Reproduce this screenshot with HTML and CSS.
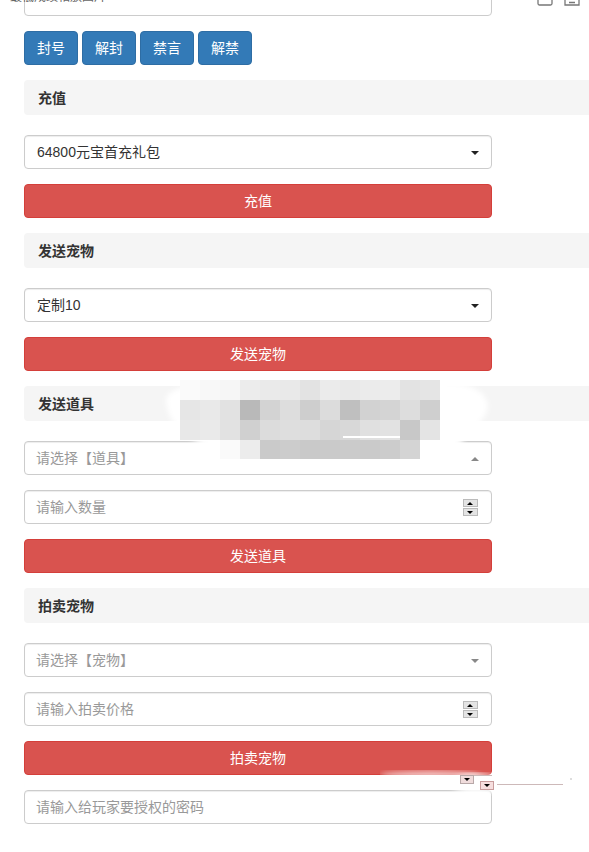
FILE: index.html
```html
<!DOCTYPE html>
<html lang="en">
<head>
  <meta charset="UTF-8">
  <title>GM</title>
  <link rel="stylesheet" href="styles.css">
</head>
<body>

  <div class="page">
    <div class="top-row">
      <span class="top-label">最低成绩相放图片</span>
      <span class="top-icons">
        <svg width="16" height="6" viewBox="0 0 16 6"><path d="M1 0v3.5a1.5 1.5 0 0 0 1.5 1.5h11a1.5 1.5 0 0 0 1.500-1.500v-3.500" fill="none" stroke="#777" stroke-width="1.300"/></svg>
        <svg width="16" height="6" viewBox="0 0 16 6"><path d="M1 0v5h14v-5M5 2.500h6" fill="none" stroke="#777" stroke-width="1.300"/></svg>
      </span>
    </div>
    <div class="control top-input"></div>

    <div class="btn-row">
      <button class="btn btn-blue">封号</button>
      <button class="btn btn-blue">解封</button>
      <button class="btn btn-blue">禁言</button>
      <button class="btn btn-blue">解禁</button>
    </div>

    <h4 class="bar">充值</h4>
    <div class="control select">64800元宝首充礼包<i class="caret"></i></div>
    <button class="btn btn-red">充值</button>

    <h4 class="bar">发送宠物</h4>
    <div class="control select">定制10<i class="caret"></i></div>
    <button class="btn btn-red">发送宠物</button>

    <h4 class="bar">发送道具</h4>
    <div class="control select muted">请选择【道具】<i class="caret caret-up"></i></div>
    <div class="control muted">请输入数量<span class="spin"><i class="caret-s caret-s-up"></i><i class="caret-s"></i></span></div>
    <button class="btn btn-red">发送道具</button>

    <h4 class="bar">拍卖宠物</h4>
    <div class="control select muted">请选择【宠物】<i class="caret caret-down-gray"></i></div>
    <div class="control muted">请输入拍卖价格<span class="spin"><i class="caret-s caret-s-up"></i><i class="caret-s"></i></span></div>
    <button class="btn btn-red">拍卖宠物</button>
    <div class="control muted">请输入给玩家要授权的密码</div>
  </div>

  <!-- mosaic over the heading -->
  <svg class="smudge smudge-mosaic" width="360" height="120" viewBox="150 370 360 120">
    <defs><filter id="soft"><feGaussianBlur stdDeviation="2.500"/></filter></defs>
    <path d="M166 400C168 384 210 382 260 384C320 378 420 378 462 384C492 392 498 412 468 432C462 454 420 472 340 462C280 460 250 460 240 458C200 448 168 432 166 400Z" fill="#fff" filter="url(#soft)"/>
    <g id="mosaic"></g>
    <rect x="343" y="436" width="57" height="2" fill="#fff"/>
  </svg>

  <!-- smudge over the last button -->
  <svg class="smudge smudge-bottom" width="200" height="50" viewBox="380 750 200 50">
    <defs><filter id="soft2"><feGaussianBlur stdDeviation="3"/></filter></defs>
    <ellipse cx="430" cy="776" rx="50" ry="5" fill="#fff" opacity=".7" filter="url(#soft2)"/>
    <ellipse cx="476" cy="784" rx="24" ry="10" fill="#fff" filter="url(#soft2)"/>
    <path d="M474 775h18v1h-18zM497 784h66v1h-66z" fill="#cdb9b9"/>
    <rect x="460.500" y="775.500" width="13" height="8" fill="#f0dcdc" stroke="#b8a8a8"/>
    <path d="M464 778h6l-3 3z" fill="#000"/>
    <rect x="480.500" y="781.500" width="13" height="8" fill="#f6dede" stroke="#c89c9c"/>
    <path d="M484 784h6l-3 3z" fill="#000"/>
    <rect x="570" y="778" width="2" height="2" fill="#ddd"/>
  </svg>

  <script>
    // mosaic cell colours, one row per 20px band, starting at x=180
    const rows = [
      [380, ["fafafa","f8f8f8","f6f6f6","ececec","eaeaea","e9e9e9","e3e3e3","ebebeb","e9e9e9","ebebeb","ececec","e3e3e3","e5e5e5"]],
      [400, ["e6e6e6","e9e9e9","e2e2e2","b9b9b9","d3d3d3","dddddd","cecece","dcdcdc","bfbfbf","d2d2d2","d4d4d4","dddddd","cfcfcf"]],
      [420, ["e8e8e8","eaeaea","e2e2e2","d0d0d0","dcdcdc","dedede","dddddd","d6d6d6","d8d8d8","e0e0e0","e2e2e2","c8c8c8","e4e4e4"]],
      [440, [null,null,"fafafa","ececec","cacaca","cccccc","c9c9c9","cacaca","cbcbcb","cacaca","cccccc","d4d4d4",null]]
    ];
    const mosaic = document.getElementById("mosaic");
    rows.forEach(([y, cells]) => {
      cells.forEach((c, i) => {
        if (!c) return;
        const r = document.createElementNS("http://www.w3.org/2000/svg", "rect");
        r.setAttribute("x", 180 + i * 20);
        r.setAttribute("y", y);
        r.setAttribute("width", 20);
        r.setAttribute("height", y === 440 ? 19 : 20);
        r.setAttribute("fill", "#" + c);
        mosaic.appendChild(r);
      });
    });
  </script>

</body>
</html>
```

FILE: styles.css
```css
* {
  box-sizing: border-box;
}
html, body {
  margin: 0;
  height: 852px;
  overflow: hidden;
  background: #fff;
}
body {
  position: relative;
  font-family: "Liberation Sans", "Noto Sans CJK SC", sans-serif;
  font-size: 14px;
  color: #333;
}
.page {
  padding: 0 0 0 24px;
  margin-top: -21px;
}
.top-row {
  position: relative;
  z-index: 1;
  height: 25px;
  margin-left: -14px;
  display: flex;
  justify-content: space-between;
  align-items: flex-end;
}
.top-label {
  font-size: 12px;
  color: #666;
  line-height: 16px;
  margin-bottom: -1px;
}
.top-icons {
  display: flex;
  gap: 11px;
  padding-right: 9px;
  height: 6px;
  margin-bottom: -2px;
}
.top-input {
  margin-top: -22px;
}
.control {
  position: relative;
  width: 468px;
  height: 34px;
  margin-bottom: 15px;
  padding: 6px 12px;
  line-height: 20px;
  background: #fff;
  border: 1px solid #ccc;
  border-radius: 4px;
  box-shadow: inset 0 1px 1px rgba(0,0,0,0.075);
}
.muted {
  padding-left: 11px;
  color: #999;
}
.caret {
  position: absolute;
  right: 12px;
  top: 15px;
  border-left: 4px solid transparent;
  border-right: 4px solid transparent;
  border-top: 4px solid #222;
}
.caret-up {
  border-top: 0;
  border-bottom: 4px solid #888;
}
.caret-down-gray {
  border-top-color: #888;
}
.spin {
  position: absolute;
  right: 13px;
  top: 8px;
  width: 15px;
  height: 17px;
  display: flex;
  flex-direction: column;
  gap: 1px;
}
.caret-s {
  flex: 1;
  background: #e4e4e4;
  border: 1px solid #bbb;
  position: relative;
}
.caret-s::after {
  content: "";
  position: absolute;
  left: 3px;
  top: 2px;
  border-left: 3px solid transparent;
  border-right: 3px solid transparent;
  border-top: 3px solid #000;
}
.caret-s-up::after {
  border-top: 0;
  border-bottom: 3px solid #000;
}
.btn {
  display: block;
  height: 34px;
  padding: 6px 12px;
  font: inherit;
  line-height: 20px;
  color: #fff;
  border: 1px solid transparent;
  border-radius: 4px;
}
.btn-row {
  display: flex;
  gap: 4px;
  margin-bottom: 15px;
}
.btn-blue {
  width: 54px;
  background: #337ab7;
  border-color: #2e6da4;
}
.btn-red {
  width: 468px;
  margin-bottom: 15px;
  background: #d9534f;
  border-color: #d43f3a;
}
.bar {
  height: 35px;
  margin: 0 0 20px;
  padding: 10px 14px;
  font-size: 14px;
  line-height: 16px;
  font-weight: bold;
  background: #f5f5f5;
  border-radius: 4px 0 0 4px;
}
.smudge {
  position: absolute;
}
.smudge-mosaic {
  left: 150px;
  top: 370px;
}
.smudge-bottom {
  left: 380px;
  top: 750px;
}
```
